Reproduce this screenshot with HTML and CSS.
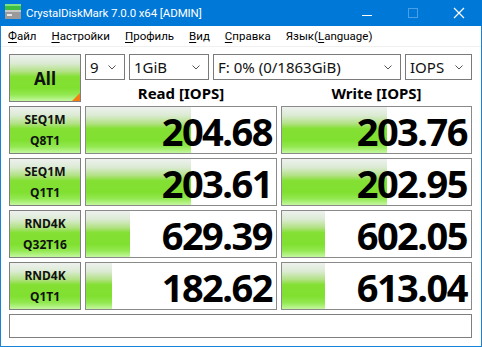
FILE: index.html
```html
<!DOCTYPE html>
<html lang="ru">
<head>
  <meta charset="UTF-8">
  <title>CrystalDiskMark 7.0.0 x64 [ADMIN]</title>
  <link rel="stylesheet" href="styles.css">
</head>
<body>
  <div class="window">
    <div class="titlebar">
      <svg class="app-icon" width="16" height="16" viewBox="0 0 16 16">
        <rect x="0" y="0" width="16" height="6" fill="#3fbf3f"/>
        <rect x="0" y="0" width="16" height="2" fill="#7fe07f"/>
        <rect x="0" y="6" width="16" height="9" fill="#9a9a9a"/>
        <rect x="0" y="6" width="16" height="2" fill="#c8c8c8"/>
        <rect x="2" y="10" width="5" height="2" fill="#e8e8e8"/>
      </svg>
      <span class="title">CrystalDiskMark 7.0.0 x64 [ADMIN]</span>
      <div class="caption">
        <svg class="cap-btn" width="46" height="26" viewBox="0 0 46 26">
          <line x1="18" y1="15.5" x2="28" y2="15.5" stroke="#fff" stroke-width="1"/>
        </svg>
        <svg class="cap-btn" width="46" height="26" viewBox="0 0 46 26">
          <rect x="18.5" y="8.5" width="9" height="9" fill="none" stroke="#4b9fe6" stroke-width="1"/>
        </svg>
        <svg class="cap-btn" width="46" height="26" viewBox="0 0 46 26">
          <path d="M18 8 L28 18 M28 8 L18 18" stroke="#fff" stroke-width="1.2"/>
        </svg>
      </div>
    </div>

    <div class="menubar">
      <span class="menu-item"><u>Ф</u>айл</span>
      <span class="menu-item"><u>Н</u>астройки</span>
      <span class="menu-item"><u>П</u>рофиль</span>
      <span class="menu-item"><u>В</u>ид</span>
      <span class="menu-item"><u>С</u>правка</span>
      <span class="menu-item">Язык(<u>L</u>anguage)</span>
    </div>

    <div class="main">
      <div class="board">
        <button class="btn-all">All</button>
        <div class="selects">
          <div class="combo c-count"><span>9</span><svg class="chev" width="8" height="5" viewBox="0 0 8 5"><polyline points="0.5,0.5 4,4 7.5,0.5" fill="none" stroke="#555" stroke-width="1"/></svg></div>
          <div class="combo c-size"><span>1GiB</span><svg class="chev" width="8" height="5" viewBox="0 0 8 5"><polyline points="0.5,0.5 4,4 7.5,0.5" fill="none" stroke="#555" stroke-width="1"/></svg></div>
          <div class="combo c-drive"><span>F: 0% (0/1863GiB)</span><svg class="chev" width="8" height="5" viewBox="0 0 8 5"><polyline points="0.5,0.5 4,4 7.5,0.5" fill="none" stroke="#555" stroke-width="1"/></svg></div>
          <div class="combo c-unit"><span>IOPS</span><svg class="chev" width="8" height="5" viewBox="0 0 8 5"><polyline points="0.5,0.5 4,4 7.5,0.5" fill="none" stroke="#555" stroke-width="1"/></svg></div>
        </div>
        <div class="col-head">Read [IOPS]</div>
        <div class="col-head">Write [IOPS]</div>

        <button class="btn-test">SEQ1M<br>Q8T1</button>
        <div class="result"><div class="bar" style="width:105px"></div><span class="value">204.68</span></div>
        <div class="result"><div class="bar" style="width:105px"></div><span class="value">203.76</span></div>

        <button class="btn-test">SEQ1M<br>Q1T1</button>
        <div class="result"><div class="bar" style="width:105px"></div><span class="value">203.61</span></div>
        <div class="result"><div class="bar" style="width:105px"></div><span class="value">202.95</span></div>

        <button class="btn-test">RND4K<br>Q32T16</button>
        <div class="result"><div class="bar" style="width:44px"></div><span class="value">629.39</span></div>
        <div class="result"><div class="bar" style="width:43px"></div><span class="value">602.05</span></div>

        <button class="btn-test">RND4K<br>Q1T1</button>
        <div class="result"><div class="bar" style="width:26px"></div><span class="value">182.62</span></div>
        <div class="result"><div class="bar" style="width:43px"></div><span class="value">613.04</span></div>

        <div class="comment"></div>
      </div>
    </div>
  </div>
</body>
</html>
```

FILE: styles.css
```css
html, body {
  margin: 0;
  padding: 0;
}
body {
  font-family: "Noto Sans", "Open Sans", sans-serif;
  background: #ffffff;
}
.window {
  width: 482px;
  height: 347px;
  box-sizing: border-box;
  border: 1px solid #1883d7;
  border-top: none;
  background: #ffffff;
  display: flex;
  flex-direction: column;
}
.titlebar {
  height: 26px;
  margin: 0 -1px;
  background: #0078d7;
  display: flex;
  align-items: center;
  color: #fff;
}
.app-icon {
  margin-left: 5px;
  margin-top: -2px;
}
.title {
  margin-left: 5px;
  font-family: Roboto, "Noto Sans", sans-serif;
  font-size: 11.5px;
  letter-spacing: -0.1px;
  margin-top: -1px;
}
.caption {
  margin-left: auto;
  display: flex;
  align-self: flex-start;
}
.cap-btn {
  display: block;
}
.menubar {
  height: 20px;
  display: flex;
  align-items: center;
  gap: 15px;
  padding-left: 7px;
  font-family: Roboto, "Noto Sans", sans-serif;
  font-size: 11.5px;
  color: #000;
  border-bottom: 1px solid #f0f0f0;
}
.menu-item u {
  text-decoration-thickness: 1px;
  text-underline-offset: 2px;
}
.main {
  padding: 7px 8px 8px 8px;
}
.board {
  display: grid;
  grid-template-columns: 72px 192px 191px;
  grid-template-rows: 26px 18px 48px 48px 48px 48px 24px;
  gap: 4px;
}
.btn-all,
.btn-test {
  font-family: "Noto Sans", "Open Sans", sans-serif;
  font-weight: bold;
  color: #111;
  border: 1px solid #7f7f7f;
  padding: 0;
  margin: 0;
  background: linear-gradient(to bottom, #eef1ee 0%, #dcebd4 18%, #b2e284 36%, #84e034 47%, #80e030 72%, #92e850 86%, #c4f8a0 100%);
}
.btn-all {
  grid-row: 1 / span 2;
  position: relative;
  font-size: 17px;
}
.btn-all::after {
  content: "";
  position: absolute;
  right: 0;
  bottom: 0;
  border-style: solid;
  border-width: 0 0 8px 8px;
  border-color: transparent transparent #f57d0f transparent;
}
.btn-test {
  font-size: 12px;
  line-height: 21px;
}
.selects {
  grid-column: 2 / span 2;
  display: flex;
  gap: 4px;
}
.combo {
  box-sizing: border-box;
  height: 26px;
  border: 1px solid #7a7a7a;
  background: #fff;
  display: flex;
  align-items: center;
  justify-content: space-between;
  padding: 0 8px 0 4px;
  font-size: 15px;
  color: #111;
}
.chev {
  margin-top: 1px;
}
.c-count { width: 40px; }
.c-size { width: 80px; }
.c-drive { width: 188px; }
.c-unit { width: 67px; }
.col-head {
  text-align: center;
  font-weight: bold;
  font-size: 15px;
  line-height: 18px;
  color: #000;
}
.result {
  position: relative;
  border: 1px solid #8a8a8a;
  background: #fff;
  display: flex;
  align-items: center;
  justify-content: flex-end;
}
.bar {
  position: absolute;
  left: 0;
  top: 0;
  bottom: 0;
  background: linear-gradient(to bottom, #eef1ee 0%, #dcebd4 18%, #b2e284 36%, #84e034 47%, #80e030 72%, #92e850 86%, #c4f8a0 100%);
}
.value {
  position: relative;
  font-family: "Noto Sans", "Open Sans", sans-serif;
  font-weight: bold;
  font-size: 38px;
  letter-spacing: -1.5px;
  line-height: 40px;
  padding-right: 4px;
  margin-top: 2px;
  color: #000;
}
.comment {
  grid-column: 1 / span 3;
  border: 1px solid #7f7f7f;
  background: #fff;
}
```
